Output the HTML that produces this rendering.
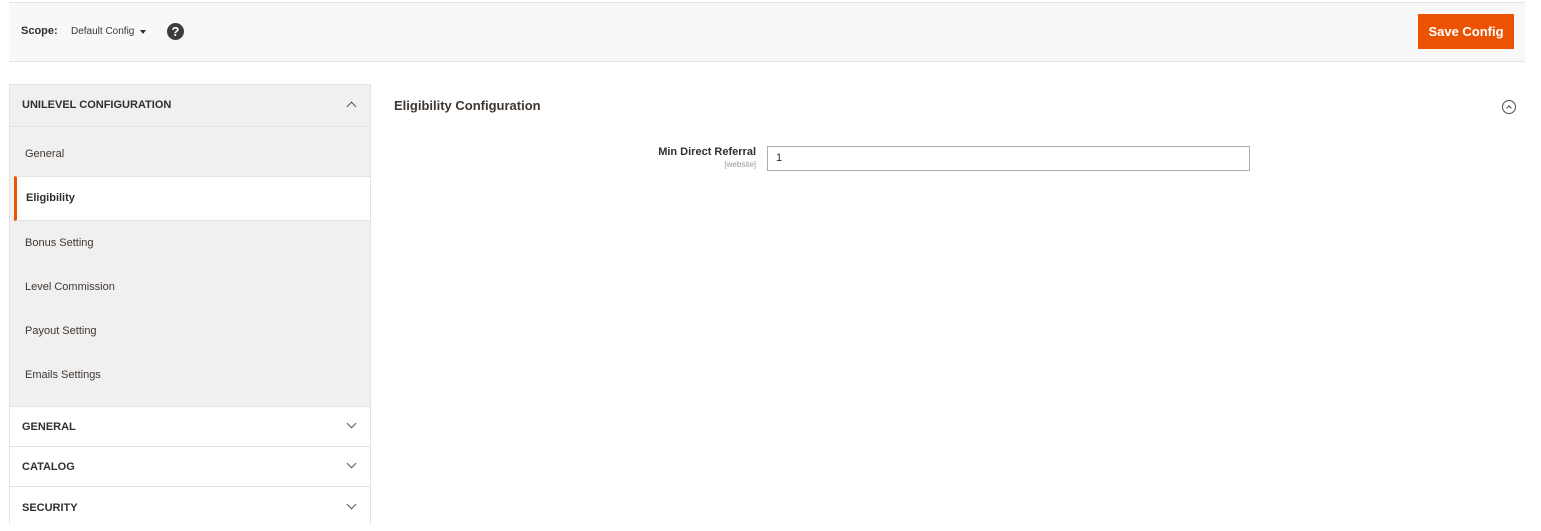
<!DOCTYPE html>
<html><head><style>
*{box-sizing:border-box;margin:0;padding:0}
body{width:1541px;height:515px;background:#fff;font-family:"Liberation Sans",sans-serif;color:#303030;position:relative;overflow:hidden}
.abs{position:absolute}
.hdr{left:9px;top:2px;width:1516px;height:60px;background:#f8f8f8;border-top:1px solid #e3e3e3;border-bottom:1px solid #e3e3e3}
.btn{left:1418px;top:14px;width:96px;height:35px;background:#eb5202;color:#fff;font-size:13px;font-weight:bold;text-align:center;line-height:35px}
.side{left:9px;top:84px;width:362px;height:440px;border:1px solid #e3e3e3;border-bottom:none;background:#f0f0f0}
.row{position:absolute;left:0;width:360px;font-size:11px}
.t{font-weight:bold;font-size:11px;color:#303030;padding-left:12px}
.sep{border-top:1px solid #e3e3e3}
.chev{position:absolute;right:15px;width:7px;height:7px;border-right:1.3px solid #555;border-bottom:1.3px solid #555}
</style></head><body>
<div class="abs hdr"></div>
<div class="abs" style="left:21px;top:25px;font-size:11px;font-weight:bold">Scope:</div>
<div class="abs" style="left:71px;top:26px;font-size:10px;color:#41362f">Default Config</div>
<div class="abs" style="left:140px;top:30px;border-left:3.5px solid transparent;border-right:3.5px solid transparent;border-top:4px solid #303030"></div>
<div class="abs" style="left:167px;top:23px;width:17px;height:17px;border-radius:50%;background:#3d3d3d;color:#fff;font-size:13px;font-weight:bold;text-align:center;line-height:17px">?</div>
<div class="abs btn">Save Config</div>

<div class="abs side">
 <div class="row" style="top:0;height:41px;line-height:41px"><span class="t">UNILEVEL CONFIGURATION</span><div class="chev" style="top:18px;transform:rotate(-135deg)"></div></div>
 <div class="row sep" style="top:41px;height:50px;line-height:55px;padding-left:15px;color:#41362f">General</div>
 <div class="row sep" style="top:91px;height:45px;line-height:43px;padding-left:15px;background:#fff;font-weight:bold;border-left:3px solid #eb5202;left:4px;width:356px;padding-left:9px;border-bottom:1px solid #e3e3e3">Eligibility</div>
 <div class="row" style="top:136px;height:44px;line-height:44px;padding-left:15px;color:#41362f">Bonus Setting</div>
 <div class="row" style="top:180px;height:44px;line-height:44px;padding-left:15px;color:#41362f">Level Commission</div>
 <div class="row" style="top:224px;height:44px;line-height:44px;padding-left:15px;color:#41362f">Payout Setting</div>
 <div class="row" style="top:268px;height:44px;line-height:44px;padding-left:15px;color:#41362f">Emails Settings</div>
 <div class="row sep" style="top:321px;height:41px;line-height:41px;background:#fff"><span class="t">GENERAL</span><div class="chev" style="top:13px;transform:rotate(45deg)"></div></div>
 <div class="row sep" style="top:361px;height:41px;line-height:40px;background:#fff"><span class="t">CATALOG</span><div class="chev" style="top:13px;transform:rotate(45deg)"></div></div>
 <div class="row sep" style="top:401px;height:45px;line-height:42px;background:#fff"><span class="t">SECURITY</span><div class="chev" style="top:14px;transform:rotate(45deg)"></div></div>
</div>

<div class="abs" style="left:394px;top:98px;font-size:13px;font-weight:bold;color:#41362f">Eligibility Configuration</div>
<div class="abs" style="left:1502px;top:100px;width:14px;height:14px;border:1px solid #514943;border-radius:50%"></div>
<div class="abs" style="left:1507px;top:106px;width:4px;height:4px;border-left:1px solid #514943;border-top:1px solid #514943;transform:rotate(45deg)"></div>
<div class="abs" style="right:785px;top:146px;font-size:11px;font-weight:bold;color:#303030;text-align:right;width:200px">Min Direct Referral</div>
<div class="abs" style="right:785px;top:160px;font-size:8px;color:#999;text-align:right;width:100px">[website]</div>
<div class="abs" style="left:767px;top:146px;width:483px;height:25px;border:1px solid #adadad;font-size:11px;line-height:23px;padding-left:8px;color:#303030">1</div>
</body></html>
